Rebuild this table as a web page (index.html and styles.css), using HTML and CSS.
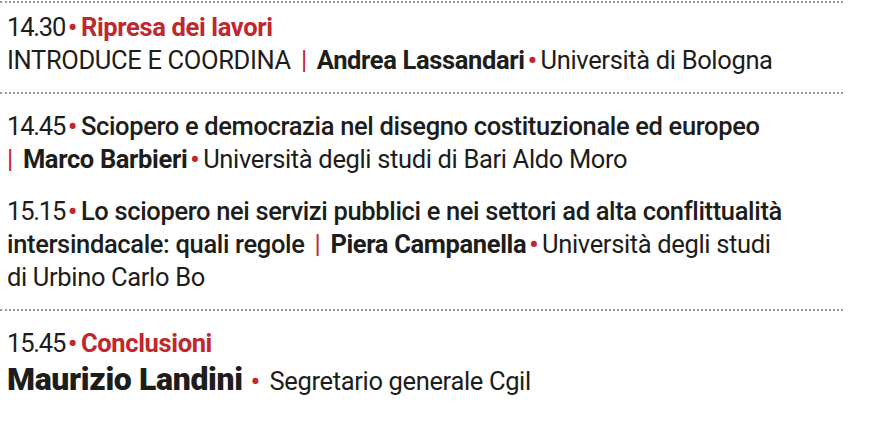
FILE: index.html
```html
<!DOCTYPE html>
<html lang="it">
<head>
<meta charset="utf-8">
<title>Programma</title>
<link rel="stylesheet" href="styles.css">
</head>
<body>
<div class="programme">
  <div class="rule"></div>
  <section class="slot slot-first">
    <p class="line"><span class="time">14.30</span><span class="dot">•</span><span class="title-red">Ripresa dei lavori</span></p>
    <p class="line"><span class="role">INTRODUCE E COORDINA</span><span class="bar">|</span><span class="name">Andrea Lassandari</span><span class="dot">•</span>Università di Bologna</p>
  </section>
  <div class="rule"></div>
  <section class="slot slot-talks">
    <div class="talk">
      <p class="line"><span class="time">14.45</span><span class="dot">•</span><span class="title">Sciopero e democrazia nel disegno costituzionale ed europeo</span></p>
      <p class="line"><span class="bar bar-lead">|</span><span class="name">Marco Barbieri</span><span class="dot">•</span>Università degli studi di Bari Aldo Moro</p>
    </div>
    <div class="talk">
      <p class="line"><span class="time">15.15</span><span class="dot">•</span><span class="title">Lo sciopero nei servizi pubblici e nei settori ad alta conflittualità</span></p>
      <p class="line"><span class="title">intersindacale: quali regole</span><span class="bar">|</span><span class="name">Piera Campanella</span><span class="dot">•</span>Università degli studi</p>
      <p class="line">di Urbino Carlo Bo</p>
    </div>
  </section>
  <div class="rule"></div>
  <section class="slot">
    <p class="line"><span class="time">15.45</span><span class="dot">•</span><span class="title-red">Conclusioni</span></p>
    <p class="line line-big"><span class="name-big">Maurizio Landini</span><span class="dot dot-wide">•</span>Segretario generale Cgil</p>
  </section>
</div>
</body>
</html>
```

FILE: styles.css
```css
html, body {
  margin: 0;
  padding: 0;
  background: #ffffff;
}

body {
  font-family: Roboto, "Noto Sans", "Liberation Sans", sans-serif;
  color: #1d1d1b;
}

.programme {
  width: 843px;
  padding-top: 1px;
}

.rule {
  border-top: 2px dotted #9a9a9a;
}

.slot {
  padding: 16px 0 15px 7px;
}

.slot-first {
  padding-top: 8px;
}

.slot-talks {
  display: flex;
  flex-direction: column;
  gap: 19px;
}

.line {
  margin: 0;
  font-size: 25.5px;
  line-height: 33px;
  font-weight: 400;
  white-space: nowrap;
  letter-spacing: -0.35px;
}

.time {
  font-weight: 400;
  letter-spacing: -1.2px;
}

.dot {
  color: #c1272d;
  font-weight: 700;
  margin: 0 4px 0 3px;
}

.bar {
  color: #c1272d;
  font-weight: 400;
  margin: 0 10px;
}

.bar-lead {
  margin-left: 0;
}

.title-red {
  color: #c1272d;
  font-weight: 700;
}

.title {
  font-weight: 500;
}

.name {
  font-weight: 700;
}

.role {
  font-weight: 400;
}

.line-big {
  line-height: 38px;
}

.name-big {
  font-size: 32px;
  font-weight: 900;
}

.dot-wide {
  margin: 0 10px 0 8px;
}
```
